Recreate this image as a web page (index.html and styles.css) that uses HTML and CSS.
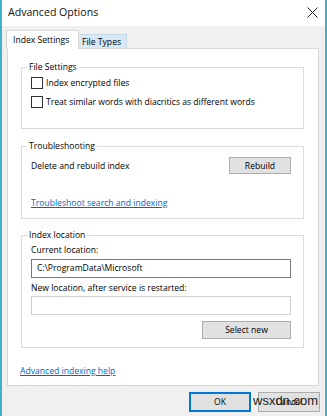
FILE: index.html
```html
<!DOCTYPE html>
<html lang="en">
<head>
    <meta charset="UTF-8">
    <title>Advanced Options</title>
    <link rel="stylesheet" href="styles.css">
</head>
<body>
    <div class="window">
        <div class="titlebar">
            <span class="title">Advanced Options</span>
            <svg class="close" width="11" height="11" viewBox="0 0 11 11">
                <path d="M0.5 0.5 L10.5 10.5 M10.5 0.5 L0.5 10.5" stroke="#222" stroke-width="1" fill="none"/>
            </svg>
        </div>

        <div class="tabs">
            <div class="tab active">Index Settings</div>
            <div class="tab hover">File Types</div>
        </div>

        <div class="panel">
            <fieldset class="group group-files">
                <legend>File Settings</legend>
                <label class="check"><span class="box"></span>Index encrypted files</label>
                <label class="check"><span class="box"></span>Treat similar words with diacritics as different words</label>
            </fieldset>

            <fieldset class="group group-trouble">
                <legend>Troubleshooting</legend>
                <div class="row">
                    <span>Delete and rebuild index</span>
                    <button class="btn btn-rebuild">Rebuild</button>
                </div>
                <a class="link trouble-link" href="#">Troubleshoot search and indexing</a>
            </fieldset>

            <fieldset class="group group-location">
                <legend>Index location</legend>
                <div class="field-label">Current location:</div>
                <div class="textbox">C:\ProgramData\Microsoft</div>
                <div class="field-label second">New location, after service is restarted:</div>
                <div class="textbox empty"></div>
                <div class="row right">
                    <button class="btn btn-select">Select new</button>
                </div>
            </fieldset>

            <a class="link help-link" href="#">Advanced indexing help</a>
        </div>

        <div class="footer">
            <button class="btn btn-ok">OK</button>
            <button class="btn btn-cancel">Cancel</button>
            <span class="watermark">wsxdn.com</span>
        </div>
    </div>
</body>
</html>
```

FILE: styles.css
```css
body {
    margin: 0;
    padding: 0;
    background: #ffffff;
    font-family: 'Open Sans', 'Liberation Sans', sans-serif;
    font-size: 8.6px;
    color: #000;
}
.window {
    position: relative;
    width: 323px;
    height: 416px;
    background: #f0f0f0;
    border-left: 2px solid #3fb2c8;
    border-right: 2px solid #3fb2c8;
}
.titlebar {
    height: 26px;
    background: #ffffff;
    display: flex;
    align-items: center;
    justify-content: space-between;
    padding: 0 6px 2px 6px;
    box-sizing: border-box;
}
.title {
    font-size: 10.6px;
    color: #111;
}
.close {
    margin-right: 1px;
}
.tabs {
    display: flex;
    align-items: flex-end;
    height: 22px;
    margin-left: 4px;
}
.tab {
    box-sizing: border-box;
    padding: 0 6px;
    line-height: 14px;
}
.tab.active {
    width: 73px;
    height: 19px;
    background: #fff;
    border: 1px solid #d9d9d9;
    border-bottom: none;
    padding-top: 2px;
    position: relative;
    z-index: 1;
    margin-bottom: -1px;
}
.tab.hover {
    width: 48px;
    height: 14px;
    background: #d9e8f5;
    border: 1px solid #c6d9ea;
    border-bottom: none;
    border-left: none;
    padding: 0 3px;
    line-height: 14px;
}
.panel {
    box-sizing: border-box;
    width: 312px;
    height: 338px;
    margin-left: 5px;
    background: #fff;
    border: 1px solid #d9d9d9;
    padding: 10px 15px 0 12px;
}
.group {
    margin: 0 0 0 1px;
    border: 1px solid #dcdcdc;
    box-sizing: border-box;
    width: 283px;
    padding: 0 12px 0 9px;
}
.group legend {
    padding: 0 2px;
    margin-left: -4px;
    line-height: 16px;
}
.group-files {
    height: 70px;
    margin-top: 0;
}
.group-trouble {
    height: 81px;
    margin-top: 9px;
}
.group-location {
    height: 121px;
    margin-top: 8px;
}
.check {
    display: flex;
    align-items: center;
    height: 16px;
    margin-bottom: 3px;
}
.box {
    width: 10px;
    height: 10px;
    border: 1px solid #333;
    background: #fff;
    margin-right: 3px;
}
.row {
    display: flex;
    align-items: center;
    justify-content: space-between;
    margin-top: 3px;
}
.row.right {
    justify-content: flex-end;
    margin-top: 6px;
}
.btn {
    font-family: inherit;
    font-size: 8.6px;
    color: #000;
    background: #e1e1e1;
    border: 1px solid #adadad;
    padding: 0;
    box-sizing: border-box;
}
.btn-rebuild {
    width: 62px;
    height: 17px;
}
.btn-select {
    width: 89px;
    height: 18px;
}
.link {
    color: #0066cc;
    text-decoration: underline;
}
.trouble-link {
    display: block;
    margin-top: 21px;
    line-height: 16px;
}
.field-label {
    line-height: 16px;
    margin-top: -1px;
}
.field-label.second {
    margin-top: 3px;
    line-height: 15px;
}
.textbox {
    box-sizing: border-box;
    height: 19px;
    margin-top: 1px;
    border: 1px solid #7a7a7a;
    padding-left: 5px;
    line-height: 17px;
}
.textbox.empty {
    border-color: #cfcfcf;
    margin-top: 0;
}
.help-link {
    display: block;
    margin-top: 15px;
    line-height: 16px;
}
.footer {
    position: relative;
    display: flex;
    justify-content: flex-end;
    gap: 7px;
    padding: 6px 5px 0 0;
}
.btn-ok,
.btn-cancel {
    width: 62px;
    height: 20px;
}
.btn-ok {
    border: 2px solid #0078d7;
}
.watermark {
    position: absolute;
    left: 251px;
    top: 8px;
    font-family: 'Liberation Sans', sans-serif;
    font-size: 13px;
    color: #222;
    line-height: 14px;
}
```
